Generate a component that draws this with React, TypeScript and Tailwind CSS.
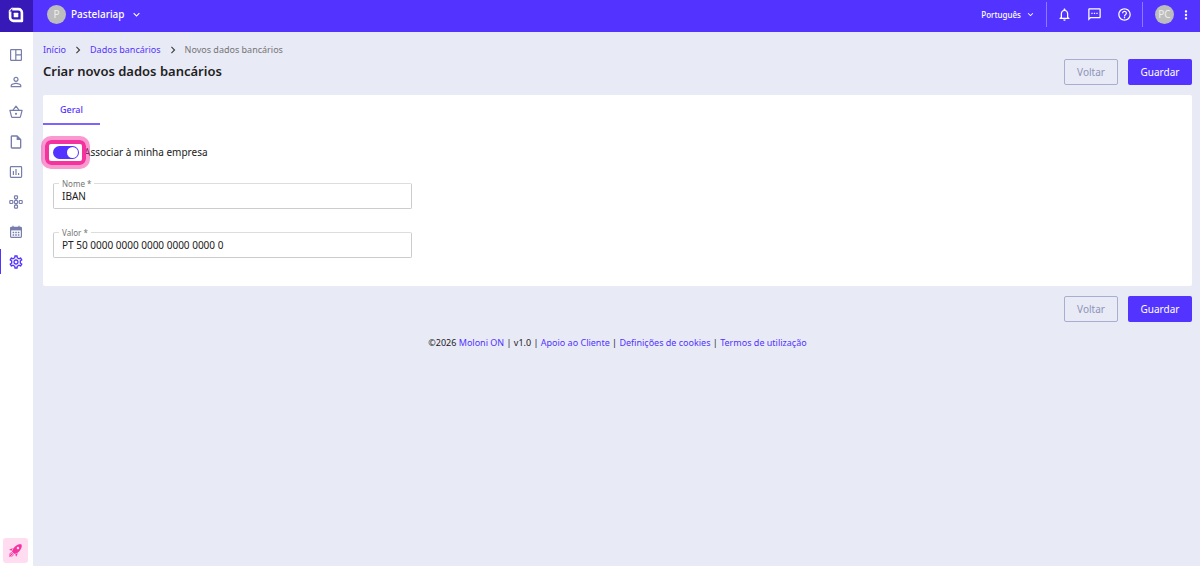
import React, { useState } from "react";
import {
  MdPersonOutline,
  MdOutlineInsertDriveFile,
  MdOutlineSettings,
  MdNotificationsNone,
  MdOutlineSms,
  MdHelpOutline,
  MdMoreVert,
  MdExpandMore,
  MdChevronRight,
} from "react-icons/md";

function Logo() {
  return (
    <svg viewBox="0 0 16 16" className="size-4" fill="none" aria-hidden="true">
      <path
        d="M4.2 2.1h6.3a3.4 3.4 0 0 1 3.4 3.4v8.4H5.5a3.4 3.4 0 0 1-3.4-3.4V4.4"
        stroke="#fff"
        strokeWidth="2.6"
        strokeLinejoin="round"
      />
      <path d="M0.8 5.4V3.6L3.6.8h1.2z" fill="#fff" />
      <rect x="5.7" y="5.7" width="4.6" height="4.6" rx="0.6" fill="#fff" />
    </svg>
  );
}

function DashboardIcon() {
  return (
    <svg viewBox="0 0 14 14" className="size-3.5" fill="none" stroke="currentColor" strokeWidth="1.2" aria-hidden="true">
      <rect x="1.6" y="1.6" width="10.8" height="10.8" rx="0.6" />
      <path d="M6.8 1.6v10.8M6.8 6.8h5.6" />
    </svg>
  );
}

function BasketIcon() {
  return (
    <svg viewBox="0 0 14 14" className="size-3.5" fill="none" stroke="currentColor" strokeWidth="1.2" strokeLinejoin="round" aria-hidden="true">
      <path d="M0.9 5.4h12.2l-1.7 6.4a.8.8 0 0 1-.8.6H3.4a.8.8 0 0 1-.8-.6z" />
      <path d="M4 5.2 7 1.2l3 4" />
      <circle cx="7" cy="8.8" r="1.1" fill="currentColor" stroke="none" />
    </svg>
  );
}

function ReportIcon() {
  return (
    <svg viewBox="0 0 14 14" className="size-3.5" fill="none" stroke="currentColor" strokeWidth="1.2" aria-hidden="true">
      <rect x="1.4" y="1.6" width="11.2" height="10.8" rx="0.8" />
      <path d="M4.4 6v4M7 4v6M9.6 8v2" />
    </svg>
  );
}

function ModulesIcon() {
  return (
    <svg viewBox="0 0 14 14" className="size-3.5" fill="none" stroke="currentColor" strokeWidth="1.2" aria-hidden="true">
      <rect x="5.5" y="0.8" width="3" height="3" rx="0.7" />
      <rect x="0.8" y="5.5" width="3" height="3" rx="0.7" />
      <rect x="5.5" y="5.5" width="3" height="3" rx="0.7" />
      <rect x="10.2" y="5.5" width="3" height="3" rx="0.7" />
      <rect x="5.5" y="10.2" width="3" height="3" rx="0.7" />
      <path d="M7 3.8v1.7M7 8.5v1.7" />
    </svg>
  );
}

function CalendarIcon() {
  return (
    <svg viewBox="0 0 14 14" className="size-3.5" fill="none" aria-hidden="true">
      <rect x="1.6" y="2.4" width="10.8" height="10" rx="0.8" stroke="currentColor" strokeWidth="1.2" />
      <path d="M1.6 2.4h10.8v3H1.6z" fill="currentColor" />
      <path d="M4 .8v2M10 .8v2" stroke="currentColor" strokeWidth="1.2" />
      <path d="M3.6 7.5h1.6M6.2 7.5h1.6M8.8 7.5h1.6M3.6 10h1.6M6.2 10h1.6M8.8 10h1.6" stroke="currentColor" strokeWidth="1.4" />
    </svg>
  );
}

function RocketIcon() {
  return (
    <svg viewBox="0 0 24 24" className="size-[15px]" fill="currentColor" aria-hidden="true">
      <path d="M13.13 22.19L11.5 18.36C13.07 17.78 14.54 17 15.9 16.09L13.13 22.19M5.64 12.5L1.81 10.87L7.91 8.1C7 9.46 6.22 10.93 5.64 12.5M21.61 2.39C21.61 2.39 16.66 .269 11 5.93C8.81 8.12 7.5 10.53 6.65 12.64C6.37 13.39 6.56 14.21 7.11 14.77L9.24 16.89C9.79 17.45 10.61 17.63 11.36 17.35C13.5 16.53 15.88 15.19 18.07 13C23.73 7.34 21.61 2.39 21.61 2.39M14.54 9.46C13.76 8.68 13.76 7.41 14.54 6.63S16.59 5.85 17.37 6.63C18.14 7.41 18.15 8.68 17.37 9.46C16.59 10.24 15.32 10.24 14.54 9.46M6.24 22L9.88 18.36C9.54 18.27 9.21 18.12 8.91 17.91L4.83 22H6.24M2 22H3.41L8.18 17.24L6.76 15.83L2 20.59V22M2 19.17L6.09 15.09C5.88 14.79 5.73 14.47 5.64 14.12L2 17.76V19.17Z" />
    </svg>
  );
}

const navItems = [
  { label: "Entidades", icon: <MdPersonOutline className="size-4" /> },
  { label: "Artigos", icon: <BasketIcon /> },
  { label: "Documentos", icon: <MdOutlineInsertDriveFile className="size-4" /> },
  { label: "Relatórios", icon: <ReportIcon /> },
  { label: "Módulos", icon: <ModulesIcon /> },
  { label: "Calendário", icon: <CalendarIcon /> },
  { label: "Definições", icon: <MdOutlineSettings className="size-4" />, active: true },
];

function Sidebar() {
  return (
    <aside className="flex w-[33px] shrink-0 flex-col items-start bg-white pt-[7px] pb-[3px]">
      <nav className="flex w-full flex-col gap-[5px]">
        <a href="#painel" aria-label="Painel" className="flex h-[25px] items-end justify-center pr-0.5 pb-0.5 text-[#777eac]">
          <DashboardIcon />
        </a>
        {navItems.map((item) => (
          <a
            key={item.label}
            href={"#" + item.label.toLowerCase()}
            aria-label={item.label}
            aria-current={item.active ? "page" : undefined}
            className={
              item.active
                ? "flex h-[25px] items-center justify-center border-l border-[#5333ff] pr-[3px] text-[#5333ff]"
                : "flex h-[25px] items-center justify-center pr-0.5 text-[#777eac]"
            }
          >
            {item.icon}
          </a>
        ))}
      </nav>
      <button type="button" aria-label="Novidades" className="mt-auto ml-[3px] flex size-[25px] items-center justify-center rounded-[3px] bg-[#ffdcf0] text-[#f5339f]">
        <RocketIcon />
      </button>
    </aside>
  );
}

function Header() {
  return (
    <header className="flex h-8 items-stretch bg-[#5333ff] text-white">
      <a href="#inicio" aria-label="Moloni ON" className="flex w-[33px] items-center justify-center bg-[#3719b8] pr-0.5 pb-[3px]">
        <Logo />
      </a>
      <button type="button" className="ml-[14px] flex items-center gap-[5px] pb-[3px] text-[10px] font-medium">
        <span className="flex size-[19px] items-center justify-center rounded-full bg-[#bdbdbd] font-normal text-[#eeeeee]">P</span>
        Pastelariap
        <MdExpandMore className="size-[13px]" />
      </button>
      <div className="ml-auto flex items-center pb-[3px]">
        <button type="button" className="flex items-center gap-1 pr-[10px] text-[8px] font-medium">
          Português
          <MdExpandMore className="size-[11px]" />
        </button>
        <div className="flex h-[25px] items-center gap-[15px] border-x border-white/35 px-[10px]">
          <button type="button" aria-label="Notificações"><MdNotificationsNone className="size-[15px]" /></button>
          <button type="button" aria-label="Mensagens"><MdOutlineSms className="size-[15px]" /></button>
          <button type="button" aria-label="Ajuda"><MdHelpOutline className="size-[15px]" /></button>
        </div>
        <button type="button" aria-label="Conta" className="ml-3 flex size-[19px] items-center justify-center rounded-full bg-[#bdbdbd] text-[10px] text-[#eeeeee]">PC</button>
        <button type="button" aria-label="Mais opções" className="mr-[7px] ml-[5px]"><MdMoreVert className="size-3.5" /></button>
      </div>
    </header>
  );
}

function Actions() {
  return (
    <div className="flex gap-[10px] text-[10px]">
      <button type="button" className="h-[26px] w-[54px] rounded-[2px] border border-[#a9aed0] text-[#8d94b8]">Voltar</button>
      <button type="submit" className="h-[26px] w-16 rounded-[2px] bg-[#5333ff] text-white">Guardar</button>
    </div>
  );
}

function Field({ id, label, initial }: { id: string; label: string; initial: string }) {
  const [value, setValue] = useState(initial);
  return (
    <div className="relative">
      <label htmlFor={id} className="absolute -top-1 left-[6px] bg-white px-[3px] text-[8px] leading-[10px] text-[#757575]">
        {label} *
      </label>
      <input
        id={id}
        required
        value={value}
        onChange={(e) => setValue(e.target.value)}
        className="block h-[26px] w-full rounded-[2px] border border-[#cccccc] border-t-[#dddddd] bg-white px-2 text-[10px] text-[#212121] outline-none"
      />
    </div>
  );
}

export default function App() {
  const [linked, setLinked] = useState(true);
  return (
    <div className="flex min-h-screen flex-col bg-[#e8eaf6] font-['Noto_Sans',sans-serif] text-[10px] text-[#212121]">
      <Header />
      <div className="flex flex-1">
        <Sidebar />
        <main className="flex-1 pt-3 pr-2 pl-[10px]">
          <form onSubmit={(e) => e.preventDefault()}>
            <nav aria-label="Caminho" className="flex h-3 items-center gap-[5px] text-[9px]">
              <a href="#inicio" className="text-[#5333ff]">Início</a>
              <MdChevronRight className="size-3.5 text-[#424242]" />
              <a href="#dados" className="text-[#5333ff]">Dados bancários</a>
              <MdChevronRight className="size-3.5 text-[#424242]" />
              <span className="text-[#757575]">Novos dados bancários</span>
            </nav>
            <div className="mt-[3px] flex h-[26px] items-center justify-between">
              <h1 className="text-[13px] font-semibold">Criar novos dados bancários</h1>
              <Actions />
            </div>
            <section className="mt-[10px] rounded-[2px] bg-white pb-7">
              <div role="tablist" className="flex">
                <button type="button" role="tab" aria-selected="true" className="h-[30px] border-b-2 border-[#7d64ff] px-[17px] pt-0.5 text-[9px] font-medium text-[#5333ff]">Geral</button>
              </div>
              <div className="flex max-w-[379px] flex-col px-[10px] pt-[19px]">
                <label className="relative flex h-[17px] items-center gap-[5px]">
                  <input
                    type="checkbox"
                    role="switch"
                    checked={linked}
                    onChange={(e) => setLinked(e.target.checked)}
                    className="peer sr-only"
                  />
                  <span className="flex h-[13px] w-[26px] items-center justify-start rounded-full bg-[#bdbdbd] p-px peer-checked:justify-end peer-checked:bg-[#5333ff]">
                    <span className="size-[11px] rounded-full bg-white" />
                  </span>
                  Associar à minha empresa
                  <span className="pointer-events-none absolute -top-1 -left-2 h-[25px] w-[41px] rounded-[6px] border-4 border-[#f5339f] ring-4 ring-[#f5339f]/50" />
                </label>
                <div className="mt-[22px] flex flex-col gap-[23px]">
                  <Field id="nome" label="Nome" initial="IBAN" />
                  <Field id="valor" label="Valor" initial="PT 50 0000 0000 0000 0000 0000 0" />
                </div>
              </div>
            </section>
            <div className="mt-[10px] flex justify-end">
              <Actions />
            </div>
          </form>
          <footer className="mt-[14px] text-center text-[9px] leading-[14px]">
            ©2026 <a href="#moloni" className="text-[#5333ff]">Moloni ON</a> | v1.0 |{" "}
            <a href="#apoio" className="text-[#5333ff]">Apoio ao Cliente</a> |{" "}
            <a href="#cookies" className="text-[#5333ff]">Definições de cookies</a> |{" "}
            <a href="#termos" className="text-[#5333ff]">Termos de utilização</a>
          </footer>
        </main>
      </div>
    </div>
  );
}
